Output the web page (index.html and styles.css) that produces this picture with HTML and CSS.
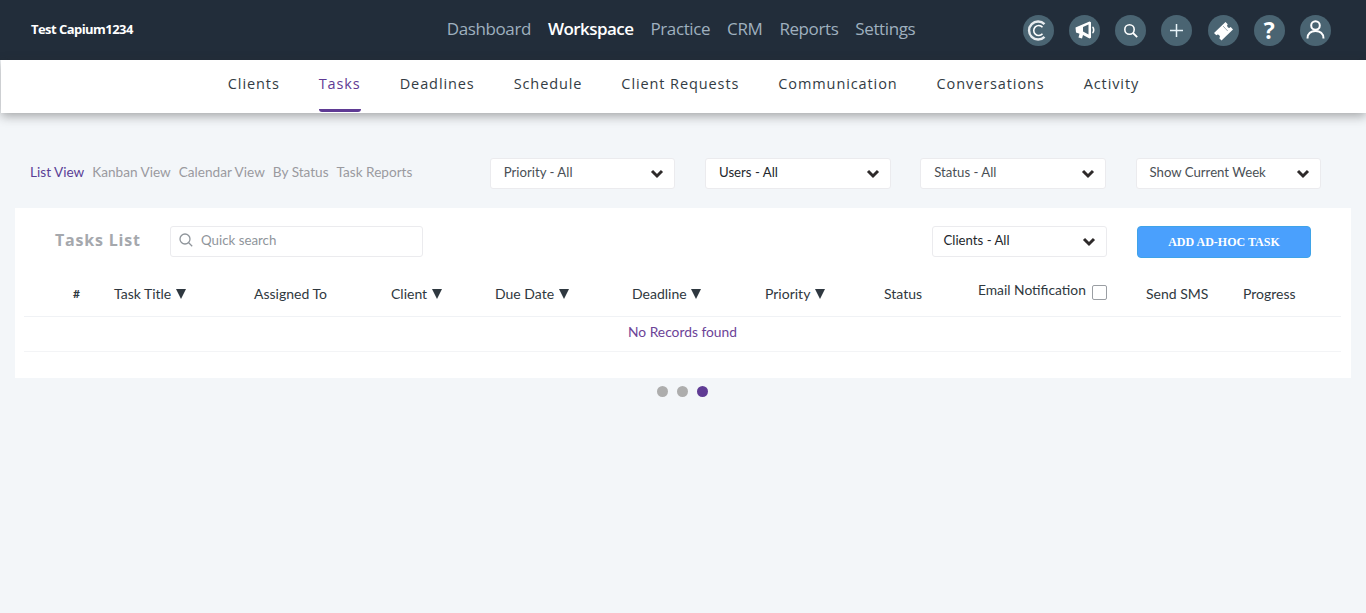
FILE: index.html
```html
<!DOCTYPE html>
<html lang="en">
<head>
    <meta charset="UTF-8" />
    <title>Tasks</title>
    <link rel="stylesheet" href="styles.css">
</head>
<body>
    <header class="topbar">
        <div class="brand">Test Capium1234</div>
        <nav class="main-nav">
            <a>Dashboard</a>
            <a class="active">Workspace</a>
            <a>Practice</a>
            <a>CRM</a>
            <a>Reports</a>
            <a>Settings</a>
        </nav>
        <div class="icons">
            <span class="icon"><svg viewBox="0 0 31 31" width="31" height="31"><path d="M21.5 9.2a9 9 0 1 0 0 12.6" fill="none" stroke="#e8ecef" stroke-width="2.4"/><path d="M19.5 12.2a5 5 0 1 0 0 6.6" fill="none" stroke="#fff" stroke-width="1.6"/></svg></span>
            <span class="icon"><svg viewBox="0 0 31 31" width="31" height="31"><path d="M6.500 12.500l14-6 1.500.8v15.500l-1.500.8-6.500-3.600-1 3.500-3.500-1 1-3.800-3.500-1.200z" fill="#fff"/><path d="M23.500 12c1.600 1 1.600 5 0 6" fill="none" stroke="#fff" stroke-width="1.600"/><path d="M19.500 9.500v10l-5.500-3v-4.500z" fill="#4a6472"/></svg></span>
            <span class="icon"><svg viewBox="0 0 31 31" width="31" height="31"><circle cx="14.500" cy="14.500" r="4.700" fill="none" stroke="#fff" stroke-width="1.600"/><path d="M18 18l4.200 4.200" stroke="#fff" stroke-width="1.800"/></svg></span>
            <span class="icon"><svg viewBox="0 0 31 31" width="31" height="31"><path d="M15.500 9v13M9 15.500h13" stroke="#e6f2f8" stroke-width="1.500"/></svg></span>
            <span class="icon"><svg viewBox="0 0 31 31" width="31" height="31"><path d="M6 18l11.500-11 2.200 2.300a2 2 0 0 0 3 2.800l2.300 2.400-11.500 11-2.200-2.300a2 2 0 0 0-3-2.900z" fill="#fff"/><path d="M15.500 11.500l4.200 4.500" stroke="#4a6472" stroke-width="1" stroke-dasharray="1.500 1.200"/></svg></span>
            <span class="icon help">?</span>
            <span class="icon"><svg viewBox="0 0 31 31" width="31" height="31"><circle cx="15.500" cy="10.500" r="4.300" fill="none" stroke="#fff" stroke-width="2"/><path d="M7.500 23.500c0-5 3.500-7.500 8-7.500s8 2.500 8 7.500" fill="none" stroke="#fff" stroke-width="2"/></svg></span>
        </div>
    </header>

    <nav class="sub-nav">
        <a>Clients</a>
        <a class="active">Tasks</a>
        <a>Deadlines</a>
        <a>Schedule</a>
        <a>Client Requests</a>
        <a>Communication</a>
        <a>Conversations</a>
        <a>Activity</a>
    </nav>

    <main>
        <section class="toolbar">
            <div class="views">
                <a class="active">List View</a>
                <a>Kanban View</a>
                <a>Calendar View</a>
                <a>By Status</a>
                <a>Task Reports</a>
            </div>
            <div class="filters">
                <div class="dropdown">Priority - All<svg class="chevron" viewBox="0 0 14 10" width="14" height="10"><path d="M2 2l5 5 5-5" fill="none" stroke="#2e2a2a" stroke-width="3"/></svg></div>
                <div class="dropdown dark">Users - All<svg class="chevron" viewBox="0 0 14 10" width="14" height="10"><path d="M2 2l5 5 5-5" fill="none" stroke="#2e2a2a" stroke-width="3"/></svg></div>
                <div class="dropdown">Status - All<svg class="chevron" viewBox="0 0 14 10" width="14" height="10"><path d="M2 2l5 5 5-5" fill="none" stroke="#2e2a2a" stroke-width="3"/></svg></div>
                <div class="dropdown">Show Current Week<svg class="chevron" viewBox="0 0 14 10" width="14" height="10"><path d="M2 2l5 5 5-5" fill="none" stroke="#2e2a2a" stroke-width="3"/></svg></div>
            </div>
        </section>

        <section class="panel">
            <div class="panel-head">
                <h2>Tasks List</h2>
                <div class="search">
                    <svg viewBox="0 0 16 16" width="16" height="16"><circle cx="7" cy="7" r="5" fill="none" stroke="#8f959b" stroke-width="1.300"/><path d="M10.700 10.700l3.500 3.500" stroke="#8f959b" stroke-width="1.300"/></svg>
                    <span>Quick search</span>
                </div>
                <div class="dropdown dark clients">Clients - All<svg class="chevron" viewBox="0 0 14 10" width="14" height="10"><path d="M2 2l5 5 5-5" fill="none" stroke="#2e2a2a" stroke-width="3"/></svg></div>
                <button class="add-btn">ADD AD-HOC TASK</button>
            </div>

            <div class="task-head">
                <div class="num">#</div>
                <div>Task Title <i></i></div>
                <div>Assigned To</div>
                <div>Client <i></i></div>
                <div>Due Date <i></i></div>
                <div>Deadline <i></i></div>
                <div>Priority <i></i></div>
                <div>Status</div>
                <div class="email">Email Notification <b></b></div>
                <div>Send SMS</div>
                <div>Progress</div>
            </div>
            <div class="no-records">No Records found</div>
        </section>

        <div class="dots">
            <span></span>
            <span></span>
            <span class="active"></span>
        </div>
    </main>
</body>
</html>
```

FILE: styles.css
```css
* {
    box-sizing: border-box;
}
html, body {
    height: 100%;
}
body {
    margin: 0;
    background-color: #f3f6f9;
    color: #2f3840;
    font-family: "Lato", "Liberation Sans", sans-serif;
    font-size: 14px;
    overflow: hidden;
}

/* top bar */
.topbar {
    display: grid;
    grid-template-columns: 1fr auto 1fr;
    align-items: center;
    height: 60px;
    padding: 0 35px 0 31px;
    background-color: #222d3a;
}
.brand {
    padding-bottom: 2px;
    color: #fff;
    font-family: "Open Sans", sans-serif;
    font-size: 13px;
    font-weight: 700;
    letter-spacing: -0.55px;
}
.main-nav {
    display: flex;
    gap: 17px;
    padding-bottom: 4px;
    color: #9fb0bf;
    font-family: "Open Sans", sans-serif;
    font-size: 17px;
    font-weight: 500;
    letter-spacing: -0.4px;
}
.main-nav .active {
    color: #fff;
    font-weight: 600;
    letter-spacing: -0.55px;
}
.icons {
    display: flex;
    justify-content: flex-end;
    gap: 15.200px;
}
.icon {
    display: block;
    width: 31px;
    height: 31px;
    border-radius: 50%;
    background-color: #4a6472;
}
.icon svg {
    display: block;
}
.help {
    color: #fff;
    font-family: "Open Sans", sans-serif;
    font-size: 23px;
    font-weight: 700;
    line-height: 31px;
    text-align: center;
}

/* sub nav */
.sub-nav {
    display: flex;
    justify-content: center;
    gap: 39px;
    height: 53px;
    margin-left: 1px;
    background-color: #fff;
    box-shadow: 0 3px 10px rgba(40, 40, 40, 0.4);
    font-family: "Open Sans", sans-serif;
    font-size: 14.500px;
    letter-spacing: 0.9px;
}
.sub-nav a {
    padding-top: 14px;
    color: #333c44;
}
.sub-nav .active {
    color: #5f3b94;
    border-bottom: 3px solid #5f3b94;
    border-radius: 0 0 3px 3px;
    height: 52px;
}

/* view tabs and filters */
.toolbar {
    display: flex;
    justify-content: space-between;
    align-items: center;
    height: 31px;
    margin: 45px 45px 0 30px;
}
.views {
    display: flex;
    gap: 8px;
    padding-bottom: 3px;
    color: #9a9a9f;
    font-size: 13.600px;
}
.views .active {
    color: #5a3f96;
}
.filters {
    display: flex;
    gap: 29.750px;
}
.dropdown {
    display: flex;
    justify-content: space-between;
    align-items: center;
    width: 185.500px;
    height: 31px;
    padding: 0 10px 4px 13px;
    background-color: #fff;
    border: 1px solid #ebebee;
    border-radius: 3px;
    color: #4a4f55;
    font-size: 13.200px;
}
.dropdown.dark {
    color: #23272c;
}
.chevron {
    margin-top: 5px;
}

/* panel */
.panel {
    height: 170px;
    margin: 19px 15px 0;
    padding: 18px 10px 0 9px;
    background-color: #fff;
}
.panel-head {
    display: flex;
    align-items: flex-start;
    height: 32px;
}
.panel-head h2 {
    width: 115px;
    margin: 0 0 0 31px;
    color: #a5a8ad;
    font-family: "Open Sans", sans-serif;
    font-size: 16px;
    font-weight: 700;
    line-height: 29px;
    letter-spacing: 0.8px;
}
.search {
    display: flex;
    align-items: center;
    gap: 7px;
    width: 253px;
    height: 31px;
    padding: 0 0 3px 7px;
    border: 1px solid #ebebee;
    border-radius: 3px;
    color: #8f959b;
    font-size: 13.300px;
}
.clients {
    width: 175px;
    height: 31px;
    margin-left: auto;
    padding-left: 10.500px;
}
.add-btn {
    width: 174px;
    height: 32px;
    margin: 0 30px;
    background-color: #4aa0fd;
    border: 1px solid #3fa3e8;
    border-radius: 4px;
    color: #fff;
    font-family: "Liberation Serif", serif;
    font-size: 12px;
    font-weight: 700;
}

/* task table */
.task-head {
    display: grid;
    grid-template-columns: 90px 140px 137px 104px 137px 133px 119px 94px 168px 97px 98px;
    align-items: center;
    height: 59px;
    padding-top: 12px;
    border-bottom: 1px solid #f0f2f5;
    color: #2f3840;
    font-size: 14px;
}
.task-head .num {
    padding-left: 49px;
    font-weight: 700;
    font-size: 12px;
}
.task-head i {
    display: inline-block;
    width: 0;
    height: 0;
    margin-left: 1px;
    border-left: 5.500px solid transparent;
    border-right: 5.500px solid transparent;
    border-top: 10px solid #2f3840;
}
.task-head .email {
    display: flex;
    align-items: flex-start;
    gap: 6px;
    margin-top: -4px;
    font-size: 13.800px;
    line-height: 15px;
}
.task-head b {
    display: block;
    width: 15px;
    height: 15px;
    margin-top: 3px;
    background-color: #fff;
    border: 1px solid #9a9ea3;
    border-radius: 2px;
}
.no-records {
    height: 35px;
    padding-top: 6px;
    border-bottom: 1px solid #f3f4f6;
    color: #6c4397;
    font-size: 13.800px;
    text-align: center;
}

/* pager dots */
.dots {
    display: flex;
    justify-content: center;
    gap: 9px;
    margin-top: 8px;
    padding-right: 1px;
}
.dots span {
    width: 11px;
    height: 11px;
    border-radius: 50%;
    background-color: #adadad;
}
.dots .active {
    background-color: #5f3b94;
}
```
